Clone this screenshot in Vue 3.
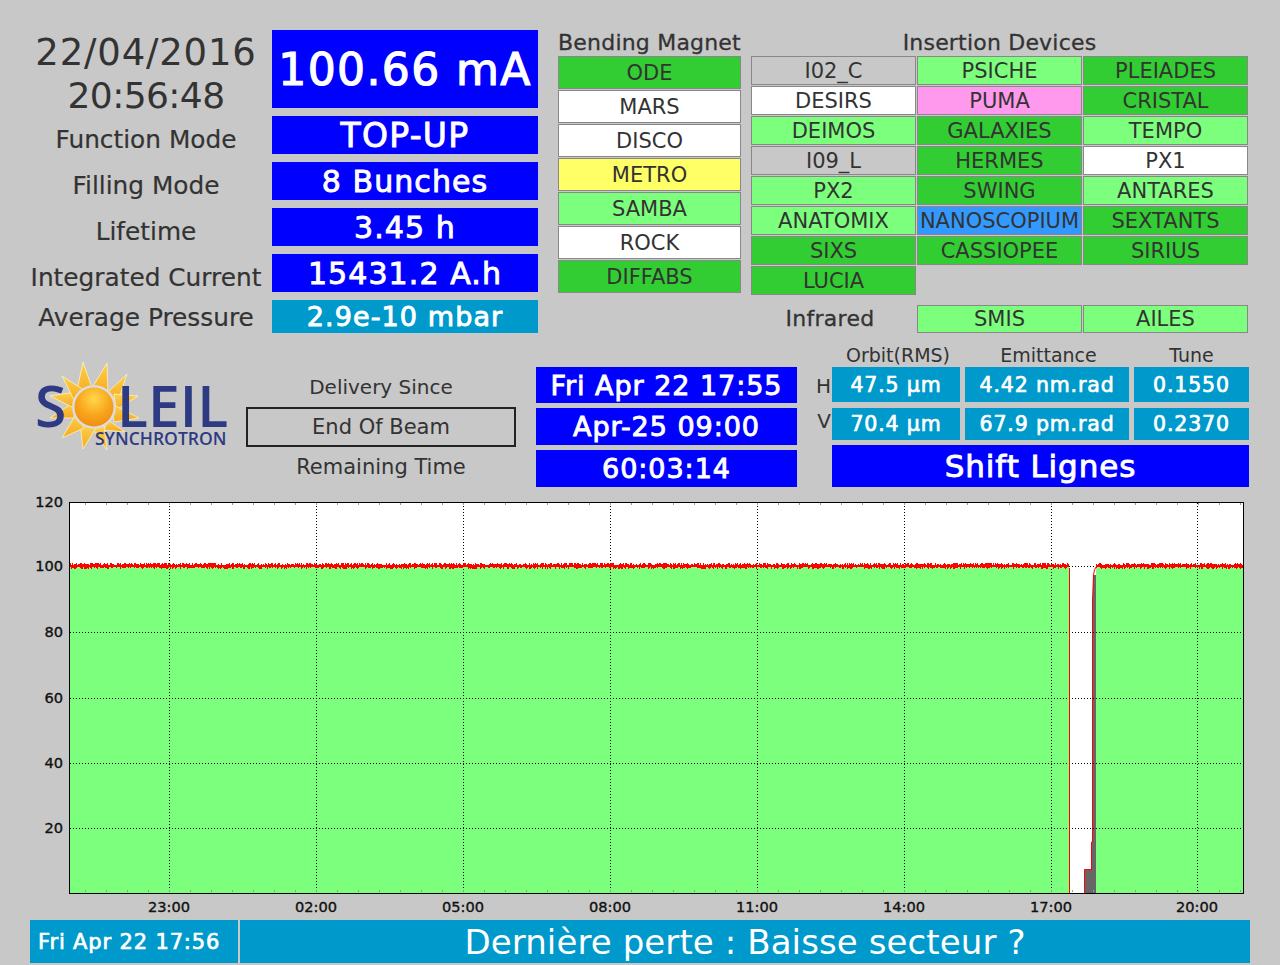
<script setup>
const stats = [
  { label: 'Function Mode', value: 'TOP-UP', cls: 'v1' },
  { label: 'Filling Mode', value: '8 Bunches', cls: 'v2' },
  { label: 'Lifetime', value: '3.45 h', cls: 'v2' },
  { label: 'Integrated Current', value: '15431.2 A.h', cls: 'v2' },
  { label: 'Average Pressure', value: '2.9e-10 mbar', cls: 'v3 teal' }
]
const bending = [
  ['ODE', 'dark'], ['MARS', 'white'], ['DISCO', 'white'], ['METRO', 'yellow'],
  ['SAMBA', 'light'], ['ROCK', 'white'], ['DIFFABS', 'dark']
]
const insertion = [
  ['I02_C', 'grey'], ['PSICHE', 'light'], ['PLEIADES', 'dark'],
  ['DESIRS', 'white'], ['PUMA', 'pink'], ['CRISTAL', 'dark'],
  ['DEIMOS', 'light'], ['GALAXIES', 'dark'], ['TEMPO', 'light'],
  ['I09_L', 'grey'], ['HERMES', 'dark'], ['PX1', 'white'],
  ['PX2', 'light'], ['SWING', 'dark'], ['ANTARES', 'light'],
  ['ANATOMIX', 'light'], ['NANOSCOPIUM', 'azure'], ['SEXTANTS', 'dark'],
  ['SIXS', 'dark'], ['CASSIOPEE', 'dark'], ['SIRIUS', 'dark'],
  ['LUCIA', 'dark']
]
const rays = [
  [83, 362, 76, 395, 92, 388], [107, 363, 92, 388, 108, 394], [127, 374, 108, 392, 118, 402],
  [138, 396, 114, 394, 116, 410], [139, 418, 112, 404, 114, 422], [125, 432, 108, 420, 104, 430],
  [107, 450, 92, 428, 104, 426], [83, 449, 80, 424, 96, 428], [62, 438, 76, 414, 84, 428],
  [50, 418, 74, 402, 74, 418], [50, 396, 76, 392, 74, 408], [62, 376, 84, 390, 74, 400]
]
const xTicks = [
  [169, '23:00'], [316, '02:00'], [463, '05:00'], [610, '08:00'],
  [757, '11:00'], [904, '14:00'], [1051, '17:00'], [1197, '20:00']
]
const yTicks = [[566, '100'], [632, '80'], [698, '60'], [763, '40'], [828, '20']]
const minorX = []
for (let x = 85; x < 1244; x += 21) minorX.push(x)

let seed = 17
function rnd() {
  seed = (seed * 16807) % 2147483647
  return seed / 2147483647
}
function noisy(from, to) {
  let d = ''
  for (let x = from; x <= to; x += 1) {
    const top = 563 + Math.floor(rnd() * 2.6)
    const bottom = 567 + Math.floor(rnd() * 2.6)
    d += `M${x + 0.5} ${top}V${bottom}`
  }
  return d
}
const lineA = noisy(70, 1068)
const lineB = noisy(1096, 1243)
</script>

<template>
  <div class="page">
    <section class="top">
      <div class="left">
        <div class="clock">
          <div class="date">22/04/2016</div>
          <div class="time">20:56:48</div>
        </div>
        <div class="value big">100.66 mA</div>
        <template v-for="(s, i) in stats" :key="s.label">
          <div class="label" :class="{ flush: i === 4 }">{{ s.label }}</div>
          <div class="value" :class="s.cls">{{ s.value }}</div>
        </template>
      </div>

      <div class="bm">
        <div class="head">Bending Magnet</div>
        <div class="bm-list">
          <div v-for="b in bending" :key="b[0]" class="cell" :class="b[1]">{{ b[0] }}</div>
        </div>
      </div>

      <div class="id">
        <div class="head">Insertion Devices</div>
        <div class="id-grid">
          <div v-for="d in insertion" :key="d[0]" class="cell" :class="d[1]">{{ d[0] }}</div>
        </div>
        <div class="ir">
          <div class="ir-label">Infrared</div>
          <div class="cell light">SMIS</div>
          <div class="cell light">AILES</div>
        </div>
      </div>
    </section>

    <section class="mid">
      <svg class="logo" viewBox="30 355 200 100" width="200" height="100" aria-label="Soleil Synchrotron">
        <defs>
          <radialGradient id="ball" cx="0.5" cy="0.3" r="0.75">
            <stop offset="0" stop-color="#ffd84a" />
            <stop offset="0.55" stop-color="#f9a51c" />
            <stop offset="1" stop-color="#ee8a12" />
          </radialGradient>
          <linearGradient id="ray" x1="0" y1="0" x2="0" y2="1">
            <stop offset="0" stop-color="#fdd24a" />
            <stop offset="1" stop-color="#f6a921" />
          </linearGradient>
        </defs>
        <polygon
          v-for="(r, i) in rays"
          :key="i"
          :points="`${r[0]},${r[1]} ${r[2]},${r[3]} ${r[4]},${r[5]}`"
          fill="url(#ray)"
          stroke="#fff2c0"
          stroke-width="0.8"
        />
        <text x="35" y="427" class="logo-main">S</text>
        <circle cx="94" cy="407" r="22" fill="#dcdcdc" />
        <circle cx="94" cy="407" r="19.5" fill="url(#ball)" />
        <text x="117" y="427" class="logo-main">LEIL</text>
        <text x="95" y="445" class="logo-sub">SYNCHROTRON</text>
      </svg>

      <div class="delivery">
        <div class="d-line narrow">Delivery Since</div>
        <div class="d-line d-box">End Of Beam</div>
        <div class="d-line">Remaining Time</div>
      </div>

      <div class="times">
        <div class="value t">Fri Apr 22 17:55</div>
        <div class="value t">Apr-25 09:00</div>
        <div class="value t">60:03:14</div>
      </div>

      <div class="beam">
        <div></div>
        <div class="bh orbit">Orbit(RMS)</div>
        <div class="bh emit">Emittance</div>
        <div class="bh">Tune</div>
        <div class="axis">H</div>
        <div class="value teal m rh">47.5 µm</div>
        <div class="value teal m rh">4.42 nm.rad</div>
        <div class="value teal m rh">0.1550</div>
        <div class="axis">V</div>
        <div class="value teal m rv">70.4 µm</div>
        <div class="value teal m rv">67.9 pm.rad</div>
        <div class="value teal m rv">0.2370</div>
        <div class="value shift">Shift Lignes</div>
      </div>
    </section>

    <svg class="chart" viewBox="0 488 1280 432" width="1280" height="432">
      <rect x="69" y="502" width="1175" height="391" fill="#fff" />
      <rect x="70" y="567" width="999" height="326" fill="#7cff7c" />
      <rect x="1096" y="567" width="147" height="326" fill="#7cff7c" />
      <rect x="1085" y="869" width="11" height="24" fill="#666" />
      <rect x="1092" y="842" width="4" height="27" fill="#666" />
      <rect x="1093" y="575" width="3" height="267" fill="#666" />

      <g class="grid">
        <line v-for="t in xTicks" :key="t[1]" :x1="t[0] + 0.5" :x2="t[0] + 0.5" y1="503" y2="893" />
        <line v-for="t in yTicks" :key="t[1]" x1="70" x2="1243" :y1="t[0] + 0.5" :y2="t[0] + 0.5" />
      </g>

      <g class="minor">
        <line v-for="x in minorX" :key="x" :x1="x + 0.5" :x2="x + 0.5" y1="503" y2="505" />
        <line v-for="x in minorX" :key="'b' + x" :x1="x + 0.5" :x2="x + 0.5" y1="890" y2="892" />
      </g>

      <path :d="lineA" class="red" />
      <path :d="lineB" class="red" />
      <polyline points="1069.5,568 1069.5,893" class="red" />
      <polyline points="1084.5,893 1084.5,869.5 1091.5,869.5 1091.5,842 1092.5,842 1092.5,600 1093.5,575 1094.5,570 1096,567" class="red" />

      <rect x="69.5" y="502.5" width="1174" height="391" class="frame" />

      <text v-for="t in xTicks" :key="t[1]" :x="t[0]" y="912" class="tick" text-anchor="middle">{{ t[1] }}</text>
      <text v-for="t in yTicks" :key="t[1]" x="63" :y="t[0] + 5" class="tick" text-anchor="end">{{ t[1] }}</text>
      <text x="63" y="507" class="tick" text-anchor="end">120</text>
    </svg>

    <section class="bottom">
      <div class="b-time">Fri Apr 22 17:56</div>
      <div class="b-msg">Dernière perte : Baisse secteur ?</div>
    </section>
  </div>
</template>

<style>
html, body { margin: 0; background: #c8c8c8; }
</style>

<style scoped>
.page {
  width: 1280px;
  height: 965px;
  box-sizing: border-box;
  padding-top: 30px;
  background: #c8c8c8;
  color: #333;
  font-family: "DejaVu Sans", sans-serif;
  overflow: hidden;
}
.top {
  display: flex;
  height: 303px;
  padding-left: 30px;
}
.left {
  display: grid;
  grid-template-columns: 232px 266px;
  grid-template-rows: 78px 38px 38px 38px 38px 33px;
  column-gap: 10px;
  row-gap: 8px;
  width: 508px;
  flex: none;
}
.clock {
  height: 78px;
  font-size: 37px;
  line-height: 43px;
  text-align: center;
}
.date { letter-spacing: 0.8px; padding-top: 1px; }
.time { letter-spacing: -0.6px; font-size: 36px; }
.label {
  font-size: 24.8px;
  line-height: 30px;
  padding-top: 9px;
  text-align: center;
  white-space: nowrap;
  -webkit-text-stroke: 0.2px #333;
}
.label.flush { padding-top: 3px; }
.value {
  display: flex;
  align-items: center;
  justify-content: center;
  background: #0000ff;
  color: #fff;
  white-space: nowrap;
  -webkit-text-stroke: 0.9px #fff;
}
.value.teal { background: #0099cc; }
.big { font-size: 44px; letter-spacing: 1.4px; -webkit-text-stroke-width: 1.2px; }
.v1 { font-size: 33px; letter-spacing: 1.3px; }
.v2 { font-size: 30px; letter-spacing: 1.1px; }
.v3 { font-size: 27px; letter-spacing: 1.1px; }
.bm {
  width: 183px;
  margin-left: 20px;
  flex: none;
}
.id {
  width: 497px;
  margin-left: 10px;
  flex: none;
}
.head {
  height: 26px;
  font-size: 22px;
  line-height: 26px;
  text-align: center;
  white-space: nowrap;
  letter-spacing: 0.2px;
  -webkit-text-stroke: 0.3px #333;
}
.cell {
  display: flex;
  align-items: center;
  justify-content: center;
  box-sizing: border-box;
  border: 1px solid #888;
  font-size: 21px;
  white-space: nowrap;
  overflow: hidden;
}
.bm-list {
  display: grid;
  grid-auto-rows: 33px;
  row-gap: 1px;
}
.id-grid {
  display: grid;
  grid-template-columns: repeat(3, 165px);
  grid-auto-rows: 29px;
  gap: 1px;
}
.dark { background: #32cd32; }
.light { background: #7cff7c; }
.white { background: #fff; }
.grey { background: #c8c8c8; }
.yellow { background: #ffff66; }
.pink { background: #ff99ee; }
.azure { background: #3399ff; }
.ir {
  display: grid;
  grid-template-columns: repeat(3, 165px);
  grid-template-rows: 28px;
  column-gap: 1px;
  margin-top: 10px;
}
.ir-label {
  font-size: 22px;
  line-height: 28px;
  text-align: center;
  padding-right: 7px;
  letter-spacing: 0.3px;
  -webkit-text-stroke: 0.3px #333;
}
.mid {
  display: flex;
  align-items: flex-end;
  height: 154px;
  padding-left: 30px;
}
.logo {
  flex: none;
  margin: 0 16px 32px 0;
}
.logo-main {
  font-family: "Open Sans", sans-serif;
  font-size: 57px;
  font-weight: 600;
  fill: #2e3b82;
}
.logo-sub {
  font-family: "Open Sans", sans-serif;
  font-size: 17.5px;
  font-weight: 600;
  fill: #2e3b82;
}
.delivery {
  width: 270px;
  flex: none;
  display: grid;
  grid-auto-rows: 40px;
}
.d-line {
  display: flex;
  align-items: center;
  justify-content: center;
  font-size: 21px;
}
.d-line.narrow { font-size: 20px; }
.d-box {
  box-sizing: border-box;
  border: 2px solid #222;
}
.times {
  width: 261px;
  flex: none;
  margin-left: 20px;
  display: grid;
  grid-template-rows: 36px 37px 37px;
  row-gap: 5px;
}
.t { font-size: 27px; letter-spacing: 0.95px; }
.beam {
  display: grid;
  grid-template-columns: 30px 128px 164px 115px;
  grid-template-rows: 23px 35px 38px 47px;
  column-gap: 5px;
  flex: none;
}
.bh {
  font-size: 19px;
  line-height: 23px;
  text-align: center;
  white-space: nowrap;
}
.orbit { padding-left: 4px; }
.emit { padding-left: 3px; }
.axis {
  font-size: 20px;
  line-height: 39px;
  text-align: right;
  margin-right: -4px;
}
.m { font-size: 20.5px; letter-spacing: 0.85px; -webkit-text-stroke-width: 0.7px; }
.rv { margin-top: 6px; height: 32px; }
.rh { height: 35px; }
.shift {
  grid-column: 2 / 5;
  font-size: 31px;
  letter-spacing: 0.9px;
  height: 42px;
  margin-top: 5px;
}
.chart {
  display: block;
  margin-top: 1px;
}
.grid line {
  stroke: #000;
  stroke-width: 1;
  stroke-dasharray: 1 2;
}
.minor line {
  stroke: #999;
  stroke-width: 1;
}
.red {
  fill: none;
  stroke: #f00;
  stroke-width: 1;
}
.frame {
  fill: none;
  stroke: #000;
  stroke-width: 1;
}
.tick {
  font-family: "DejaVu Sans", sans-serif;
  font-size: 14.6px;
  fill: #111;
  stroke: #111;
  stroke-width: 0.35px;
}
.bottom {
  display: flex;
  gap: 2px;
  height: 43px;
  padding-left: 30px;
}
.b-time, .b-msg {
  display: flex;
  align-items: center;
  background: #0099cc;
  color: #fff;
  white-space: nowrap;
}
.b-time {
  width: 208px;
  box-sizing: border-box;
  padding-left: 8px;
  font-size: 21px;
  letter-spacing: 0.85px;
  -webkit-text-stroke: 0.7px #fff;
}
.b-msg {
  width: 1010px;
  justify-content: center;
  font-size: 34px;
  letter-spacing: 0.1px;
}
</style>
